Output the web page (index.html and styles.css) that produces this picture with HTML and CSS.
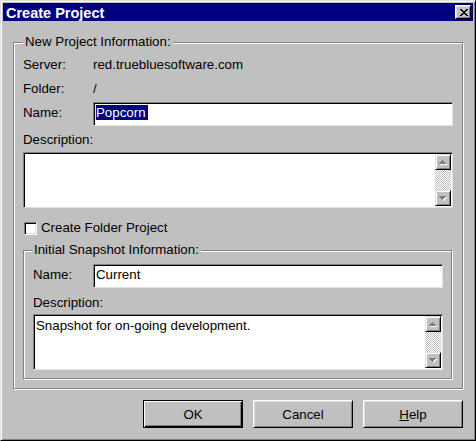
FILE: index.html
```html
<!DOCTYPE html>
<html lang="en">
<head>
<meta charset="utf-8">
<title>Create Project</title>
<link rel="stylesheet" href="styles.css">
</head>
<body>
<div class="window">
  <div class="titlebar">
    <span class="title">Create Project</span>
    <button class="close" aria-label="Close">
      <svg width="8" height="7" viewBox="0 0 8 7" shape-rendering="crispEdges">
        <rect x="0" y="0" width="2" height="1" fill="#000"/><rect x="6" y="0" width="2" height="1" fill="#000"/>
        <rect x="1" y="1" width="2" height="1" fill="#000"/><rect x="5" y="1" width="2" height="1" fill="#000"/>
        <rect x="2" y="2" width="4" height="1" fill="#000"/>
        <rect x="3" y="3" width="2" height="1" fill="#000"/>
        <rect x="2" y="4" width="4" height="1" fill="#000"/>
        <rect x="1" y="5" width="2" height="1" fill="#000"/><rect x="5" y="5" width="2" height="1" fill="#000"/>
        <rect x="0" y="6" width="2" height="1" fill="#000"/><rect x="6" y="6" width="2" height="1" fill="#000"/>
      </svg>
    </button>
  </div>
  <div class="body">
    <div class="group outer">
      <span class="legend">New Project Information:</span>
      <div class="info-row"><span class="lbl">Server:</span><span>red.truebluesoftware.com</span></div>
      <div class="info-row"><span class="lbl">Folder:</span><span>/</span></div>
      <div class="field-row"><span class="lbl">Name:</span><div class="input"><span class="sel">Popcorn</span></div></div>
      <div class="caption">Description:</div>
      <div class="memo">
        <div class="memo-text"></div>
        <div class="scrollbar">
          <div class="sb-btn">
            <svg width="8" height="5" viewBox="0 0 8 5" shape-rendering="crispEdges">
              <rect x="4" y="1" width="1" height="1" fill="#fff"/><rect x="3" y="2" width="3" height="1" fill="#fff"/><rect x="2" y="3" width="5" height="1" fill="#fff"/><rect x="1" y="4" width="7" height="1" fill="#fff"/>
              <rect x="3" y="0" width="1" height="1" fill="#808080"/><rect x="2" y="1" width="3" height="1" fill="#808080"/><rect x="1" y="2" width="5" height="1" fill="#808080"/><rect x="0" y="3" width="7" height="1" fill="#808080"/>
            </svg>
          </div>
          <div class="sb-track"></div>
          <div class="sb-btn">
            <svg width="8" height="5" viewBox="0 0 8 5" shape-rendering="crispEdges">
              <rect x="1" y="1" width="7" height="1" fill="#fff"/><rect x="2" y="2" width="5" height="1" fill="#fff"/><rect x="3" y="3" width="3" height="1" fill="#fff"/><rect x="4" y="4" width="1" height="1" fill="#fff"/>
              <rect x="0" y="0" width="7" height="1" fill="#808080"/><rect x="1" y="1" width="5" height="1" fill="#808080"/><rect x="2" y="2" width="3" height="1" fill="#808080"/><rect x="3" y="3" width="1" height="1" fill="#808080"/>
            </svg>
          </div>
        </div>
      </div>
      <div class="check-row"><span class="checkbox"></span><span>Create Folder Project</span></div>
      <div class="group inner">
        <span class="legend">Initial Snapshot Information:</span>
        <div class="field-row"><span class="lbl">Name:</span><div class="input">Current</div></div>
        <div class="caption">Description:</div>
        <div class="memo">
          <div class="memo-text">Snapshot for on-going development.</div>
          <div class="scrollbar">
            <div class="sb-btn">
              <svg width="8" height="5" viewBox="0 0 8 5" shape-rendering="crispEdges">
                <rect x="4" y="1" width="1" height="1" fill="#fff"/><rect x="3" y="2" width="3" height="1" fill="#fff"/><rect x="2" y="3" width="5" height="1" fill="#fff"/><rect x="1" y="4" width="7" height="1" fill="#fff"/>
                <rect x="3" y="0" width="1" height="1" fill="#808080"/><rect x="2" y="1" width="3" height="1" fill="#808080"/><rect x="1" y="2" width="5" height="1" fill="#808080"/><rect x="0" y="3" width="7" height="1" fill="#808080"/>
              </svg>
            </div>
            <div class="sb-track"></div>
            <div class="sb-btn">
              <svg width="8" height="5" viewBox="0 0 8 5" shape-rendering="crispEdges">
                <rect x="1" y="1" width="7" height="1" fill="#fff"/><rect x="2" y="2" width="5" height="1" fill="#fff"/><rect x="3" y="3" width="3" height="1" fill="#fff"/><rect x="4" y="4" width="1" height="1" fill="#fff"/>
                <rect x="0" y="0" width="7" height="1" fill="#808080"/><rect x="1" y="1" width="5" height="1" fill="#808080"/><rect x="2" y="2" width="3" height="1" fill="#808080"/><rect x="3" y="3" width="1" height="1" fill="#808080"/>
              </svg>
            </div>
          </div>
        </div>
      </div>
    </div>
    <div class="buttons">
      <button class="btn default">OK</button>
      <button class="btn">Cancel</button>
      <button class="btn"><u>H</u>elp</button>
    </div>
  </div>
</div>
</body>
</html>
```

FILE: styles.css
```css
* { box-sizing: border-box; }
html, body { margin: 0; padding: 0; }
body {
  background: #c0c0c0;
  font-family: "Liberation Sans", Arial, sans-serif;
  font-size: 13.3px;
  color: #000;
}
.window {
  width: 476px;
  height: 441px;
  background: #c0c0c0;
  border: 1px solid;
  border-color: #dfdfdf #000 #000 #dfdfdf;
  box-shadow: inset 1px 1px #fff, inset -1px -1px #808080;
  padding: 2px;
}
.titlebar {
  height: 18px;
  background: #000080;
  color: #fff;
  display: flex;
  align-items: flex-start;
  justify-content: space-between;
  padding: 0 2px 0 3px;
}
.title {
  font-weight: bold;
  font-size: 14.5px;
  line-height: 18px;
  padding-top: 1px;
  white-space: nowrap;
}
.close {
  width: 16px;
  height: 14px;
  margin-top: 2px;
  padding: 0 0 0 1px;
  background: #c0c0c0;
  border: 1px solid;
  border-color: #fff #000 #000 #fff;
  box-shadow: inset 1px 1px #dfdfdf, inset -1px -1px #808080;
  display: flex;
  align-items: center;
  justify-content: center;
}
.close svg { display: block; }
.body { padding: 21px 10px 0 10px; }
.group {
  position: relative;
  border: 1px solid #808080;
  box-shadow: inset 1px 1px #fff, 1px 1px #fff;
}
.outer { padding: 10px 9px 9px 9px; }
.inner { margin-top: 14px; margin-right: 1px; padding: 13px 8px 8px 9px; }
.legend {
  position: absolute;
  top: -8px;
  left: 8px;
  padding: 0 2px;
  line-height: 14px;
  background: #c0c0c0;
  white-space: nowrap;
}
.outer > .legend { left: 9px; }
.info-row { display: flex; height: 24px; line-height: 24px; white-space: nowrap; }
.lbl { flex: none; width: 70px; }
.inner .lbl { width: 60px; }
.field-row { display: flex; align-items: flex-start; margin-top: 1px; }
.inner .field-row { margin-top: 0; }
.field-row .lbl { line-height: 22px; }
.input {
  flex: 1;
  height: 24px;
  background: #fff;
  border: 1px solid;
  border-color: #808080 #dce4dc #dce4dc #808080;
  box-shadow: inset 1px 1px #000;
  padding: 2px 1px 0 2px;
  line-height: 15px;
  white-space: nowrap;
  overflow: hidden;
}
.sel {
  background: #000080;
  color: #fff;
  margin-left: -1px;
  border-left: 1px solid #f0f080;
  padding-right: 2px;
}
.caption { line-height: 16px; margin-top: 6px; margin-bottom: 4px; }
.inner .caption { margin-top: 7px; margin-bottom: 3px; }
.memo {
  display: flex;
  height: 56px;
  background: #fff;
  border: 1px solid;
  border-color: #808080 #dce4dc #dce4dc #808080;
  box-shadow: inset 1px 1px #000;
  padding: 1px;
}
.memo-text { flex: 1; padding: 2px 1px 0 1px; line-height: 15px; }
.scrollbar { flex: none; width: 16px; display: flex; flex-direction: column; }
.sb-btn {
  flex: none;
  height: 16px;
  background: #c0c0c0;
  border: 1px solid;
  border-color: #dfdfdf #000 #000 #dfdfdf;
  box-shadow: inset 1px 1px #fff, inset -1px -1px #808080;
  display: flex;
  align-items: center;
  justify-content: center;
}
.sb-btn svg { display: block; }
.sb-track {
  flex: 1;
  background: repeating-conic-gradient(#c0c0c0 0 25%, #fff 0 50%) 0 0 / 2px 2px;
}
.check-row {
  display: flex;
  align-items: flex-start;
  margin-top: 12px;
  height: 16px;
  line-height: 16px;
}
.checkbox {
  flex: none;
  width: 13px;
  height: 13px;
  margin: 2px 4px 0 1px;
  background: #fff;
  border: 1px solid;
  border-color: #808080 #fff #fff #808080;
  box-shadow: inset 1px 1px #000, inset -1px -1px #dfdfdf;
}
.buttons {
  display: flex;
  justify-content: flex-end;
  gap: 10px;
  margin-top: 11px;
}
.btn {
  width: 100px;
  height: 28px;
  padding: 0;
  font: inherit;
  color: #000;
  background: #c0c0c0;
  border: 1px solid;
  border-color: #fff #000 #000 #fff;
  box-shadow: inset 1px 1px #dfdfdf, inset -1px -1px #808080;
}
.btn.default {
  border-color: #000;
  box-shadow: inset 1px 1px #fff, inset -1px -1px #000, inset -2px -2px #808080;
}
```
